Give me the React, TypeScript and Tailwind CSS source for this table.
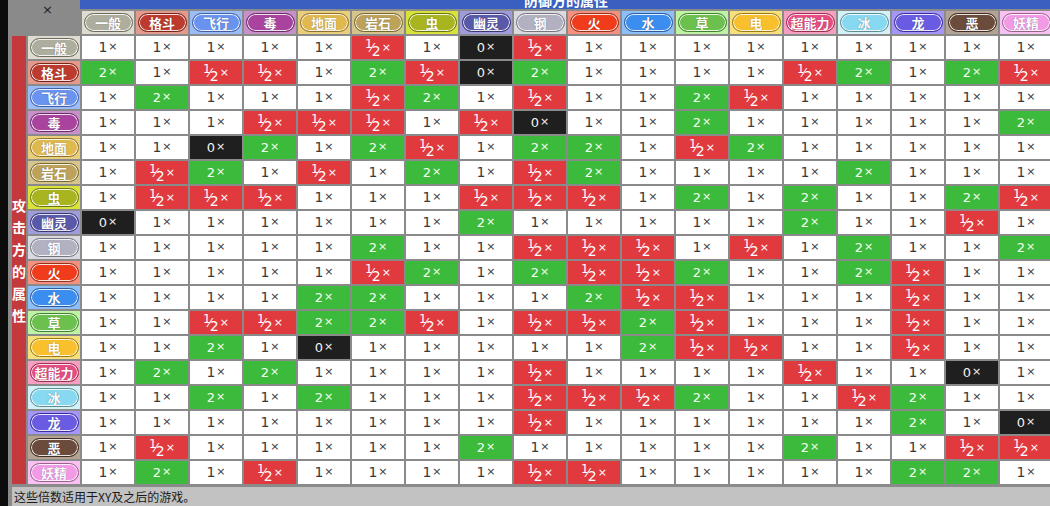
import React from 'react';

// 属性颜色：单元格底色 / 胶囊填充 / 胶囊描边
const TYPES = [
    { name: '一般', cell: 'bg-[#dedcd0]', fill: 'bg-[#aeae9e]', bd: 'border-[#6d6c5c]' },
    { name: '格斗', cell: 'bg-[#e39a8c]', fill: 'bg-[#bc3a2e]', bd: 'border-[#7a2419]' },
    { name: '飞行', cell: 'bg-[#9cbcf6]', fill: 'bg-[#6a93f0]', bd: 'border-[#3f5fa8]' },
    { name: '毒', cell: 'bg-[#c890c8]', fill: 'bg-[#a8449e]', bd: 'border-[#6a2c66]' },
    { name: '地面', cell: 'bg-[#e9cf7c]', fill: 'bg-[#e0b94e]', bd: 'border-[#8f7030]' },
    { name: '岩石', cell: 'bg-[#d5c48e]', fill: 'bg-[#bca25a]', bd: 'border-[#77682c]' },
    { name: '虫', cell: 'bg-[#d9e23a]', fill: 'bg-[#a8b51f]', bd: 'border-[#6b7412]' },
    { name: '幽灵', cell: 'bg-[#9f9cd9]', fill: 'bg-[#5a58a8]', bd: 'border-[#38366d]' },
    { name: '钢', cell: 'bg-[#d9d9df]', fill: 'bg-[#b1b1c1]', bd: 'border-[#75757f]' },
    { name: '火', cell: 'bg-[#f3907f]', fill: 'bg-[#f03c1a]', bd: 'border-[#93331c]' },
    { name: '水', cell: 'bg-[#8cbff7]', fill: 'bg-[#3b8ef0]', bd: 'border-[#2f5a9a]' },
    { name: '草', cell: 'bg-[#bdf3a2]', fill: 'bg-[#6cc04e]', bd: 'border-[#43802f]' },
    { name: '电', cell: 'bg-[#f6e07e]', fill: 'bg-[#f7c02c]', bd: 'border-[#9b7a15]' },
    { name: '超能力', cell: 'bg-[#f5a0c0]', fill: 'bg-[#e84b82]', bd: 'border-[#98314f]' },
    { name: '冰', cell: 'bg-[#d3f1f7]', fill: 'bg-[#87d8f1]', bd: 'border-[#5d8c94]' },
    { name: '龙', cell: 'bg-[#a496f5]', fill: 'bg-[#6a5be3]', bd: 'border-[#3c2e96]' },
    { name: '恶', cell: 'bg-[#b4a293]', fill: 'bg-[#6b4b3c]', bd: 'border-[#3f2c22]' },
    { name: '妖精', cell: 'bg-[#f7c2f1]', fill: 'bg-[#f39ae7]', bd: 'border-[#996088]' },
];

// Gen6+ 相性：攻击方 -> 防御方，h = ½×，未列出的为 1×
const TABLE: Record<string, Record<string, string>> = {
    一般: { 岩石: 'h', 幽灵: '0', 钢: 'h' },
    格斗: { 一般: '2', 飞行: 'h', 毒: 'h', 岩石: '2', 虫: 'h', 幽灵: '0', 钢: '2', 超能力: 'h', 冰: '2', 恶: '2', 妖精: 'h' },
    飞行: { 格斗: '2', 岩石: 'h', 虫: '2', 钢: 'h', 草: '2', 电: 'h' },
    毒: { 毒: 'h', 地面: 'h', 岩石: 'h', 幽灵: 'h', 钢: '0', 草: '2', 妖精: '2' },
    地面: { 飞行: '0', 毒: '2', 岩石: '2', 虫: 'h', 钢: '2', 火: '2', 草: 'h', 电: '2' },
    岩石: { 格斗: 'h', 飞行: '2', 地面: 'h', 虫: '2', 钢: 'h', 火: '2', 冰: '2' },
    虫: { 格斗: 'h', 飞行: 'h', 毒: 'h', 幽灵: 'h', 钢: 'h', 火: 'h', 草: '2', 超能力: '2', 恶: '2', 妖精: 'h' },
    幽灵: { 一般: '0', 幽灵: '2', 超能力: '2', 恶: 'h' },
    钢: { 岩石: '2', 钢: 'h', 火: 'h', 水: 'h', 电: 'h', 冰: '2', 妖精: '2' },
    火: { 岩石: 'h', 虫: '2', 钢: '2', 火: 'h', 水: 'h', 草: '2', 冰: '2', 龙: 'h' },
    水: { 地面: '2', 岩石: '2', 火: '2', 水: 'h', 草: 'h', 龙: 'h' },
    草: { 飞行: 'h', 毒: 'h', 地面: '2', 岩石: '2', 虫: 'h', 钢: 'h', 火: 'h', 水: '2', 草: 'h', 龙: 'h' },
    电: { 飞行: '2', 地面: '0', 水: '2', 草: 'h', 电: 'h', 龙: 'h' },
    超能力: { 格斗: '2', 毒: '2', 钢: 'h', 超能力: 'h', 恶: '0' },
    冰: { 飞行: '2', 地面: '2', 钢: 'h', 火: 'h', 水: 'h', 草: '2', 冰: 'h', 龙: '2' },
    龙: { 钢: 'h', 龙: '2', 妖精: '0' },
    恶: { 格斗: 'h', 幽灵: '2', 超能力: '2', 恶: 'h', 妖精: 'h' },
    妖精: { 格斗: '2', 毒: 'h', 钢: 'h', 火: 'h', 龙: '2', 恶: '2' },
};

const CJK = { fontFamily: '"Noto Sans CJK SC", "Noto Sans", sans-serif' };
const NUM = { fontFamily: '"DejaVu Sans", "Noto Sans", sans-serif' };

function Pill({ t }: { t: (typeof TYPES)[number] }) {
    return (
        <div
            className={`w-[49px] h-[19px] rounded-full border ${t.bd} ${t.fill} shadow-[inset_0_0_0_1px_rgba(255,255,255,0.85)] flex items-center justify-center text-white font-bold text-[13px] leading-none [text-shadow:0_0_1px_rgba(0,0,0,0.45)]`}
            style={CJK}
        >
            {t.name}
        </div>
    );
}

function Value({ v }: { v: string }) {
    if (v === '2') {
        return (
            <div className="bg-[#3cba3c] flex items-center justify-center text-[#f4fff0] text-[13px]" style={NUM}>
                2<span className="text-[11px] ml-[1px]">×</span>
            </div>
        );
    }
    if (v === '0') {
        return (
            <div className="bg-[#1f1f1f] flex items-center justify-center text-[#f2f2f2] text-[13px]" style={NUM}>
                0<span className="text-[11px] ml-[1px]">×</span>
            </div>
        );
    }
    if (v === 'h') {
        return (
            <div className="bg-[#e0393e] flex items-center justify-center text-white leading-none" style={NUM}>
                <span className="text-[12px] relative -top-[4px]">1</span>
                <span className="text-[13px] -ml-[2px]">⁄</span>
                <span className="text-[14px] relative top-[3px] -ml-[1px]">2</span>
                <span className="text-[11px] ml-[1px]">×</span>
            </div>
        );
    }
    return (
        <div className="bg-white flex items-center justify-center text-[#3a3a3a] text-[14px]" style={NUM}>
            1<span className="text-[11px] ml-[1px]">×</span>
        </div>
    );
}

export default function App() {
    return (
        <div className="w-[1050px] h-[506px] overflow-hidden flex bg-[#8a8a8a]">
            <div className="w-[8px] shrink-0 bg-[#0c0c0c]" />
            <div className="flex flex-col shrink-0">
                <div className="flex">
                    {/* 攻击方 竖条 */}
                    <div className="w-[20px] shrink-0 pt-[36px] pl-[4px]">
                        <div
                            className="w-[14px] h-[448px] bg-[#c4393b] flex flex-col items-center justify-center gap-[4px] text-white font-bold text-[14px] leading-[18px]"
                            style={CJK}
                        >
                            {'攻击方的属性'.split('').map((c) => (
                                <span key={c}>{c}</span>
                            ))}
                        </div>
                    </div>

                    <div className="grid grid-cols-[52px_repeat(18,52px)] grid-rows-[9px_repeat(19,23px)] gap-[2px]">
                        <div className="row-span-2 flex justify-start pl-[14px] pt-[3px] text-[13px] text-[#222] leading-none" style={NUM}>
                            ×
                        </div>
                        <div className="col-span-18 bg-[#3a5fc0] -ml-[2px] overflow-hidden flex justify-center">
                            <span className="text-white font-bold text-[14px] leading-[14px] -mt-[7px]" style={CJK}>
                                防御方的属性
                            </span>
                        </div>
                        {TYPES.map((t) => (
                            <div key={'h' + t.name} className={`${t.cell} flex items-center justify-center`}>
                                <Pill t={t} />
                            </div>
                        ))}
                        {TYPES.map((row) => (
                            <React.Fragment key={'r' + row.name}>
                                <div className={`${row.cell} flex items-center justify-center`}>
                                    <Pill t={row} />
                                </div>
                                {TYPES.map((col) => (
                                    <Value key={col.name} v={TABLE[row.name][col.name] ?? '1'} />
                                ))}
                            </React.Fragment>
                        ))}
                    </div>
                </div>
                <div className="ml-[4px] mt-[3px] h-[20px] bg-[#c2c2c2] flex items-center pl-[2px] text-[12px] text-[#1a1a1a]" style={CJK}>
                    这些倍数适用于XY及之后的游戏。
                </div>
            </div>
        </div>
    );
}
